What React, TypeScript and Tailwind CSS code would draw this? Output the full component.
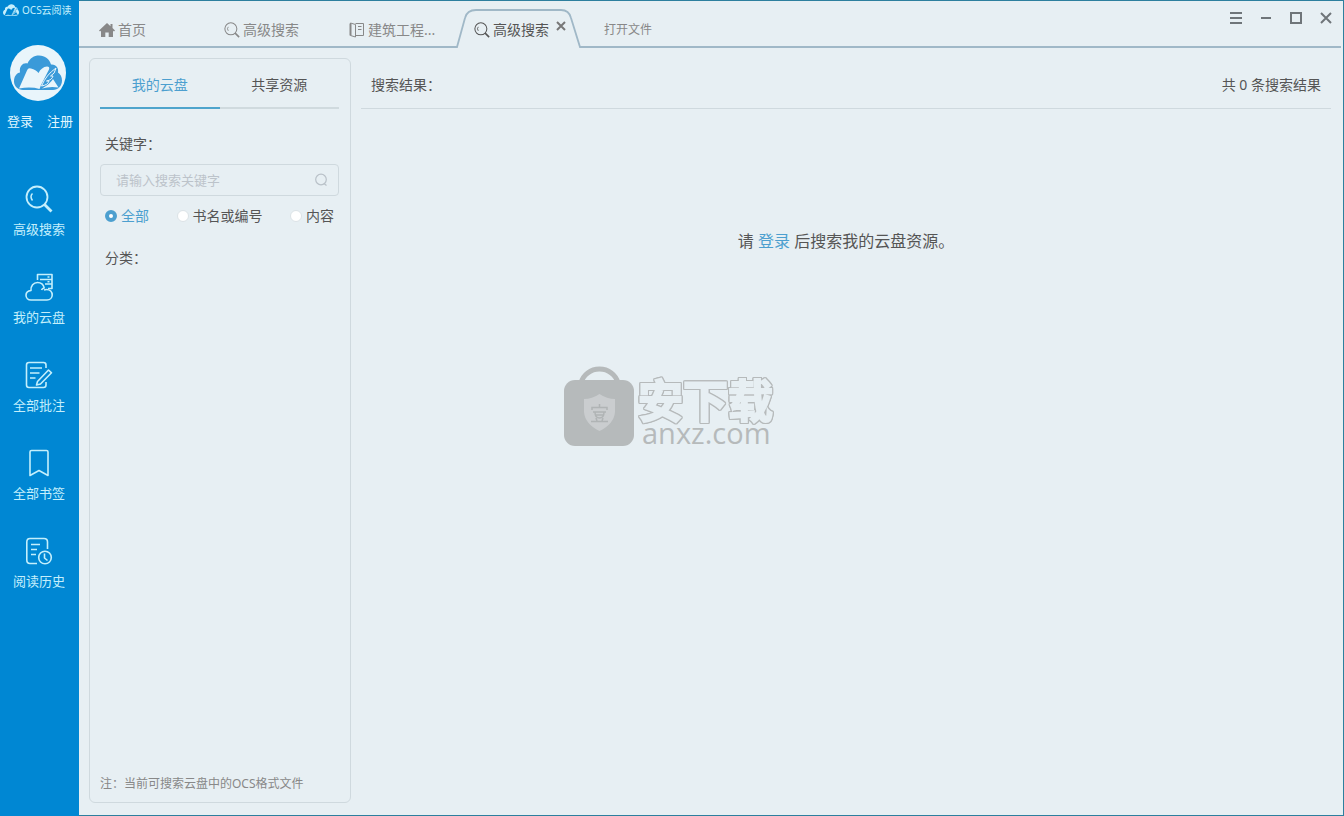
import type { ReactNode } from "react";

type NavItem = { label: string; icon: ReactNode };

function CloudLogo({ className, page }: { className: string; page: string }) {
  return (
    <svg viewBox="0 0 48 36" className={className} aria-hidden>
      <path
        d="M9 35C4 35 0 31 0 26.500C0 21 3 18 6 17.500C5 11 9 7.500 13.500 8.500C16 3 20 0.500 25 0.500C31 0.500 35.500 4 37 9.500C42 9 45 13 44 17.500C46.500 19 48 22 48 25.500C48 31 44 35 39 35Z"
        fill="currentColor"
      />
      <path
        d="M5 33.500L13 15.500Q14 12.500 17 13.500Q22 14.500 24.500 18Q27.500 12 33 11.500Q36 11.500 35 14.500L27 30L25.500 34Q17 31.500 5 33.500Z"
        fill={page}
      />
      <path d="M42 13Q32 20 27.500 31Q34 30 35 26L32.500 26Q38 25 39 21L36.500 21Q41 19 42 13Z" fill="currentColor" stroke={page} strokeWidth="1" />
      <path d="M28 33.500Q36 29 39 24L44.500 32.500Q36 31 28 33.500Z" fill={page} />
    </svg>
  );
}

function Magnifier({ className }: { className: string }) {
  return (
    <svg viewBox="0 0 28 28" className={className} fill="none" stroke="currentColor" strokeWidth="1.800" aria-hidden>
      <circle cx="12" cy="12" r="10.500" />
      <path d="M7.500 15.500Q4.500 11.500 7.500 8.500" strokeWidth="1.500" />
      <path d="M19.500 19.500L26.500 26.500" strokeWidth="2.800" />
    </svg>
  );
}

function LineIcon({ children }: { children: ReactNode }) {
  return (
    <svg
      viewBox="0 0 28 28"
      className="size-7 shrink-0"
      fill="none"
      stroke="currentColor"
      strokeWidth="1.600"
      strokeLinejoin="round"
      aria-hidden
    >
      {children}
    </svg>
  );
}

const NAV: NavItem[] = [
  { label: "高级搜索", icon: <Magnifier className="size-7 shrink-0" /> },
  {
    label: "我的云盘",
    icon: (
      <LineIcon>
        <path d="M6 27C3 27 1 24.800 1 22.300C1 19.500 3 17.800 6 17.500C5.600 12.800 8.500 9.500 12.500 9.500C16 9.500 18.500 11.500 19.200 15C17.800 15.300 17 16 16.500 17" />
        <path d="M6 27H22C25 27 27.200 24.800 27.200 22C27.200 19 25 16.500 21.500 16.500C20.500 16.500 19.800 16.700 19 17" />
        <path d="M12.500 7V1.500H27V6.500H15M27 6.500V15.500H23M20 11H27" />
        <path d="M22.500 4H24.500M22.500 8.800H24.500" />
      </LineIcon>
    ),
  },
  {
    label: "全部批注",
    icon: (
      <LineIcon>
        <path d="M21 7V4Q21 1.500 18.500 1.500H4Q1.500 1.500 1.500 4V24Q1.500 26.500 4 26.500H18.500Q21 26.500 21 24V21" />
        <path d="M5 7H17M5 12H14.500M5 17H10.500" />
        <path d="M12.500 20.500L23.500 9L26.500 11.800L15.500 23L11.500 24Z" />
      </LineIcon>
    ),
  },
  {
    label: "全部书签",
    icon: (
      <LineIcon>
        <path d="M6.500 1.500H21.500Q23 1.500 23 3V26.500L14 21.500L5 26.500V3Q5 1.500 6.500 1.500Z" />
      </LineIcon>
    ),
  },
  {
    label: "阅读历史",
    icon: (
      <LineIcon>
        <path d="M22.500 12V5Q22.500 1.500 19 1.500H5Q1.800 1.500 1.800 5V23Q1.800 26.500 5 26.500H12" />
        <path d="M6 7.500H15M6 12.500H12M6 17.500H11" />
        <circle cx="20" cy="20.500" r="6.300" />
        <path d="M19.500 16.500V21L22.500 23.500" />
      </LineIcon>
    ),
  },
];

function Sidebar() {
  return (
    <aside className="flex w-[79px] shrink-0 flex-col bg-[#0087d3] text-[#c4effc]">
      <div className="flex h-5 items-center gap-[3px] pl-[3px] text-[10px] whitespace-nowrap">
        <CloudLogo className="h-3 w-4 shrink-0" page="#0087d3" />
        OCS云阅读
      </div>
      <div className="mt-[25px] ml-2.5 flex size-14 items-center justify-center rounded-full bg-[#e9f5fb] text-[#3a9ad9]">
        <CloudLogo className="h-9 w-12" page="#e9f5fb" />
      </div>
      <div className="mt-2.5 flex justify-between pr-1.5 pl-[7px] text-[13px] leading-5 text-[#e0f7ff]">
        <button type="button">登录</button>
        <button type="button">注册</button>
      </div>
      <nav className="mt-[54px] flex flex-col gap-[34px] pr-px">
        {NAV.map((item) => (
          <button key={item.label} type="button" className="flex flex-col items-center gap-1.5 text-[13px] leading-5">
            {item.icon}
            {item.label}
          </button>
        ))}
      </nav>
    </aside>
  );
}

function TabBar() {
  return (
    <header className="mr-0.5 flex h-[47px] items-start border-b-2 border-[#a0b8c7] text-sm text-[#888]">
      <div className="flex pt-[17px] pl-5 whitespace-nowrap" role="tablist">
        <button type="button" role="tab" className="flex h-6 w-[125px] items-center gap-[3px]">
          <svg viewBox="0 0 16 14" className="h-3.5 w-4" fill="currentColor" aria-hidden>
            <path d="M8 0L11.500 3.200V1H13.500V5L16 7.500L15 8.500L14 7.700V14H9.700V9.500H6.300V14H2V7.700L1 8.500L0 7.500Z" />
          </svg>
          首页
        </button>
        <button type="button" role="tab" className="flex h-6 w-[125px] items-center gap-[3px]">
          <Magnifier className="size-4" />
          高级搜索
        </button>
        <button type="button" role="tab" className="flex h-6 w-[125px] items-center gap-[3px]">
          <svg viewBox="0 0 16 16" className="size-4" fill="none" stroke="currentColor" aria-hidden>
            <path d="M1.500 1L6.500 2.500V15L1.500 13.500Z" />
            <path d="M1.500 1.500V13.500" strokeWidth="2" />
            <path d="M6.500 1.500H14.500V13.500H6.500M9 4.500H12.500M9 7.500H12.500" />
          </svg>
          建筑工程...
        </button>
        <div className="relative flex h-6 w-[125px] items-center text-[#555]">
          <svg viewBox="0 0 126 40" className="absolute -top-2.5 -left-[18px] h-10 w-[126px]" fill="#e7eff3" aria-hidden>
            <path d="M0 40V39H1L9 10Q11 2 20 2H105Q113 2 115 10L124 39H126V40Z" />
            <path d="M0 39H1L9 10Q11 2 20 2H105Q113 2 115 10L124 39H126" stroke="#a0b8c7" strokeWidth="1.800" fill="none" />
          </svg>
          <button type="button" role="tab" aria-selected className="relative flex items-center gap-[3px]">
            <Magnifier className="size-4" />
            高级搜索
          </button>
          <button type="button" aria-label="关闭" className="relative -mt-2 ml-[7px]">
            <svg viewBox="0 0 10 10" className="size-2.5" stroke="#777" strokeWidth="2" aria-hidden>
              <path d="M1 1L9 9M9 1L1 9" />
            </svg>
          </button>
        </div>
        <button type="button" className="h-6 pl-[5px] text-xs">
          打开文件
        </button>
      </div>
      <div className="ml-auto flex gap-[18px] pt-[11px] pr-[9px] text-[#6f7579]">
        <button type="button" aria-label="菜单">
          <svg viewBox="0 0 12 12" className="size-3" stroke="currentColor" strokeWidth="2" aria-hidden>
            <path d="M0 1H12M0 6H12M0 11H12" />
          </svg>
        </button>
        <button type="button" aria-label="最小化">
          <svg viewBox="0 0 12 12" className="size-3" stroke="currentColor" strokeWidth="2" aria-hidden>
            <path d="M1 6H11" />
          </svg>
        </button>
        <button type="button" aria-label="最大化">
          <svg viewBox="0 0 12 12" className="size-3" fill="none" stroke="currentColor" strokeWidth="2" aria-hidden>
            <path d="M1 1H11V11H1Z" />
          </svg>
        </button>
        <button type="button" aria-label="关闭窗口">
          <svg viewBox="0 0 12 12" className="size-3" stroke="currentColor" strokeWidth="2" aria-hidden>
            <path d="M1 1L11 11M11 1L1 11" />
          </svg>
        </button>
      </div>
    </header>
  );
}

const SCOPES = ["全部", "书名或编号", "内容"];

function SearchPanel() {
  return (
    <section className="flex w-[262px] shrink-0 flex-col rounded-md border border-[#cfd9de] pr-[11px] pl-2.5 text-sm text-[#555]">
      <div className="flex h-[50px]" role="tablist">
        <button type="button" role="tab" aria-selected className="flex-1 border-b-2 border-[#4ea4cc] pt-1 text-[#4c9fcf]">
          我的云盘
        </button>
        <button type="button" role="tab" className="flex-1 border-b-2 border-[#d0dade] pt-1">
          共享资源
        </button>
      </div>
      <label htmlFor="keyword" className="mt-[25px] pl-[5px] leading-5">
        关键字：
      </label>
      <div className="mt-2.5 flex h-8 items-center rounded border border-[#cfd9de] pr-2.5 pl-[15px] text-[#b9c1c8]">
        <input
          id="keyword"
          type="text"
          placeholder="请输入搜索关键字"
          className="min-w-0 flex-1 bg-transparent text-[13px] outline-none placeholder:text-[#bcc3ca]"
        />
        <button type="button" aria-label="搜索">
          <svg viewBox="0 0 14 14" className="size-3.5" fill="none" stroke="currentColor" strokeWidth="1.200" aria-hidden>
            <circle cx="7" cy="6.500" r="5.300" />
            <path d="M10 10.500L12.500 12.500" />
          </svg>
        </button>
      </div>
      <div className="mt-2.5 flex justify-between px-[5px] leading-5">
        {SCOPES.map((scope, i) => (
          <label key={scope} className="flex items-center gap-1 has-checked:text-[#4c9fcf]">
            <input
              type="radio"
              name="scope"
              defaultChecked={i === 0}
              className="size-3 appearance-none rounded-full border border-[#dce3e7] bg-white checked:border-4 checked:border-[#4c9fcf]"
            />
            {scope}
          </label>
        ))}
      </div>
      <p className="mt-[22px] pl-[5px] leading-5">分类：</p>
      <p className="mt-auto mb-2 text-xs leading-5 text-[#888]">注：当前可搜索云盘中的OCS格式文件</p>
    </section>
  );
}

function Watermark() {
  return (
    <div className="pointer-events-none absolute top-[318px] left-[485px] flex gap-1 text-[#b6babb]" aria-hidden>
      <svg viewBox="0 0 70 80" className="h-20 w-[70px]">
        <path d="M17 17A19 18 0 0 1 54 17" fill="none" stroke="currentColor" strokeWidth="5" />
        <rect y="14" width="70" height="66" rx="11" fill="currentColor" />
        <path d="M35.500 28Q43 33 51 33V46Q50 58 35.500 65Q21 58 20 46V33Q28 33 35.500 28Z" fill="#cacdcf" />
        <path
          d="M35.500 38V41M28 44V41.500H43V44M29 46H42M31 46Q31 52 35.500 52Q40 52 40 46M31 49H40M32 52L33 55M39 52L38 55M27 55.500H44"
          fill="none"
          stroke="#b0b4b5"
          strokeWidth="1.500"
        />
      </svg>
      <div className="flex flex-col">
        <span className="mt-[15px] h-10 font-['Liberation_Sans','Noto_Sans_CJK_SC',sans-serif] text-[45px] leading-[44px] font-bold text-[#e7eff3] [-webkit-text-stroke:2px_#e7eff3] [filter:drop-shadow(1px_0_0_#b6babb)_drop-shadow(-1px_0_0_#b6babb)_drop-shadow(0_1px_0_#b6babb)_drop-shadow(0_-1px_0_#b6babb)]">
          安下载
        </span>
        <span className="pl-1 font-['Open_Sans',sans-serif] text-[29px] leading-6 font-medium">anxz.com</span>
      </div>
    </div>
  );
}

function Results() {
  return (
    <section className="flex min-w-0 flex-1 flex-col text-sm text-[#555]">
      <div className="flex h-[51px] items-center justify-between border-b border-[#cfd9de] px-2.5 pt-1">
        <h1>搜索结果：</h1>
        <span>共 0 条搜索结果</span>
      </div>
      <p className="mt-[120px] text-center text-base leading-6">
        请{" "}
        <a href="#login" className="text-[#4c9fcf]">
          登录
        </a>{" "}
        后搜索我的云盘资源。
      </p>
    </section>
  );
}

export default function App() {
  return (
    <div className="flex min-h-screen bg-[#e7eff3] font-['Noto_Sans','Noto_Sans_CJK_SC',sans-serif]">
      <Sidebar />
      <div className="flex min-w-0 flex-1 flex-col border-t border-r border-b border-[#2d7f9e]">
        <TabBar />
        <main className="relative flex flex-1 gap-2.5 pt-2.5 pr-3 pb-3 pl-2.5">
          <SearchPanel />
          <Results />
          <Watermark />
        </main>
      </div>
    </div>
  );
}
